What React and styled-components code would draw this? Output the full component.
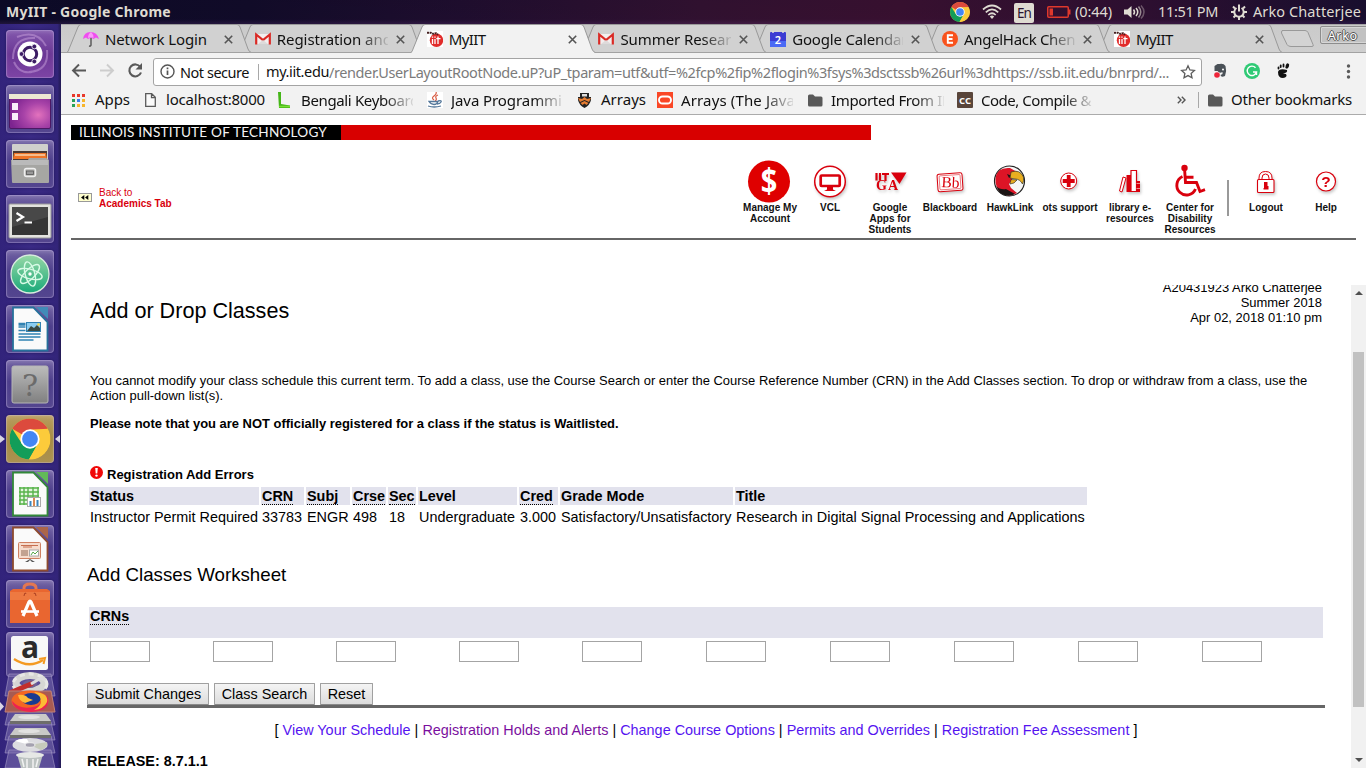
import React, { useLayoutEffect, useRef, useState } from "react";
import styled, { createGlobalStyle, css } from "styled-components";

const UI = '"Noto Sans", "Open Sans", sans-serif';
const DOC = '"Liberation Sans", Arial, sans-serif';
const RED = "#d9000d";

const Global = createGlobalStyle`
  html, body { margin: 0; padding: 0; }
  body { width: 1366px; height: 768px; overflow: hidden; background: #fff; font-family: ${DOC}; }
  *, *::before, *::after { box-sizing: border-box; }
`;

/* Text that spreads its letters so it fills a known width */
const FitText = styled.span`
  display: inline-block;
  white-space: pre;
  flex: none;
  margin-top: ${(p) => (p.$flat ? 0 : -2)}px;
`;
function Fit({ w, flat, children }) {
  const ref = useRef(null);
  const [gap, setGap] = useState(0);
  useLayoutEffect(() => {
    const natural = ref.current.getBoundingClientRect().width;
    setGap((w - natural) / String(children).length);
  }, [w, children]);
  return <FitText ref={ref} $flat={flat} style={{ letterSpacing: `${gap}px` }}>{children}</FitText>;
}

const Screen = styled.div`
  display: flex;
  flex-direction: column;
  width: 1366px;
  height: 768px;
  overflow: hidden;
`;

/* ---------- system panel ---------- */
const Panel = styled.header`
  display: flex;
  align-items: center;
  height: 24px;
  flex: none;
  padding: 0 5px 0 6px;
  background: linear-gradient(180deg, rgba(0,0,0,.12), rgba(0,0,0,.1) 80%, rgba(90,50,110,.25)),
    linear-gradient(90deg, #0d0b2b 0, #130c2d 250px, #220f33 460px, #361335 700px, #3e1235 900px, #321136 1150px, #1b1034 1366px);
  color: #dfdbd2;
  font: 14.5px/24px ${UI};
`;
const WindowTitle = styled.div`
  font-weight: 700;
  font-size: 14px;
  flex: 1;
`;
const Indicator = styled.div`
  display: flex;
  align-items: center;
  height: 24px;
  margin-right: ${(p) => p.$after || 0}px;
  svg { display: block; }
`;
const LangBadge = styled.span`
  width: 20px;
  height: 20px;
  margin-top: 1px;
  border-radius: 2px;
  background: #dfdbd2;
  color: #2b1430;
  font: 13.5px/21px ${UI};
  text-align: center;
`;

/* ---------- launcher ---------- */
const Body = styled.div`
  display: flex;
  flex: 1;
  min-height: 0;
`;
const Launcher = styled.nav`
  width: 61px;
  flex: none;
  display: flex;
  flex-direction: column;
  padding-top: 6px;
  gap: 7px;
  background: linear-gradient(90deg, #32237b, #3a2a85 50%, #33257a 94%, #221a52);
  overflow: hidden;
`;
const Tile = styled.div`
  position: relative;
  width: 48px;
  height: 48px;
  flex: none;
  margin-left: 6px;
  border-radius: 4px;
  background: ${(p) => p.$bg || "linear-gradient(180deg, #7465a5, #4b3c8b 45%, #54468f)"};
  box-shadow: inset 0 0 0 1px rgba(205, 190, 240, .3), inset 0 2px 4px rgba(255, 255, 255, .17), 0 0 3px rgba(15, 5, 60, .5);
  svg { display: block; }
`;
const AmazonTile = styled(Tile)`
  height: 45px;
  margin-top: -3px;
`;
const RunMark = styled.i`
  position: absolute;
  top: 20px;
  border: 4px solid transparent;
  ${(p) => p.$right
    ? css`right: -6px; border-right: 5px solid #d8d4e4; border-left: 0;`
    : css`left: -6px; border-left: 5px solid #d8d4e4; border-right: 0;`}
`;
const Stack = styled.div`
  margin-top: -12px;
  z-index: 1;
  svg { display: block; }
`;

/* ---------- browser ---------- */
const Browser = styled.main`
  flex: 1;
  min-width: 0;
  display: flex;
  flex-direction: column;
  background: #fff;
`;
const TabStrip = styled.div`
  display: flex;
  height: 29px;
  flex: none;
  padding-left: 5px;
  background: linear-gradient(#cacaca, #cfcfcf);
  box-shadow: inset 0 1px #a7a7a7, inset 0 -1px #a2a2a2;
`;
const TabBox = styled.div`
  position: relative;
  display: flex;
  align-items: center;
  width: 186px;
  margin-right: -14.2px;
  height: 29px;
  flex: none;
  padding: 1px 0 0 17px;
  z-index: ${(p) => p.$z};
  font: 15px/20px ${UI};
  color: #111;
`;
const TabShape = styled.svg`
  position: absolute;
  left: 0;
  top: 0;
  z-index: -1;
`;
const Favicon = styled.span`
  width: 16px;
  height: 16px;
  flex: none;
  svg { display: block; }
`;
const Clip = styled.span`
  width: ${(p) => p.$w}px;
  flex: none;
  overflow: hidden;
  white-space: nowrap;
  ${(p) => p.$fade && css`mask-image: linear-gradient(90deg, #000 74%, rgba(0,0,0,.1) 100%);`}
`;
const TabTitle = styled(Clip)`
  margin: 0 8px 0 6px;
`;
const NewTab = styled.svg`
  margin: 6px 0 0 -3px;
  flex: none;
`;
const Profile = styled.div`
  width: 50px;
  height: 18px;
  margin: 2px 0 0 4px;
  flex: none;
  border: 1px solid #8d8d8d;
  border-radius: 2px 0 0 2px;
  background: #c2c2c2;
  box-shadow: inset 0 0 0 1px #d6d6d6;
  color: #fff;
  text-shadow: 1px 0 0 #555, -1px 0 0 #555, 0 1px 0 #555, 0 -1px 0 #555;
  font: 12.5px/18px ${UI};
  padding-left: 7px;
`;
const Toolbar = styled.div`
  display: flex;
  align-items: center;
  height: 33px;
  flex: none;
  padding-top: 3px;
  background: #f2f2f2;
  > svg { flex: none; }
`;
const Omnibox = styled.div`
  display: flex;
  align-items: center;
  width: 1049px;
  flex: none;
  height: 28px;
  margin: 1px 9px 0 0;
  padding-left: 6px;
  border: 1px solid #a4a4a4;
  border-radius: 3px;
  background: #fff;
  color: #111;
  font: 14.5px/24px ${UI};
  svg { flex: none; }
`;
const NotSecure = styled.span`
  margin-left: 5px;
`;
const Divider = styled.span`
  width: 1px;
  height: 16px;
  margin: 0 ${(p) => p.$r}px 0 ${(p) => p.$l}px;
  background: #a8a8a8;
  flex: none;
`;
const UrlRest = styled.span`
  color: #7b7b7b;
  margin-right: 11px;
`;
const BookmarkBar = styled.div`
  display: flex;
  align-items: center;
  height: 29px;
  flex: none;
  background: #f2f2f2;
  border-bottom: 1px solid #ababab;
  font: 15px/22px ${UI};
  color: #111;
`;
const Bookmark = styled.div`
  display: flex;
  align-items: center;
  gap: ${(p) => p.$gap}px;
  margin-left: ${(p) => p.$before}px;
  svg { display: block; flex: none; }
`;

/* ---------- portal page ---------- */
const Page = styled.section`
  flex: 1;
  min-height: 0;
  display: flex;
  flex-direction: column;
  padding-top: 10px;
`;
const Banner = styled.div`
  width: 800px;
  height: 15px;
  margin-left: 10px;
  flex: none;
  background: #d80000;
  display: flex;
`;
const BannerName = styled.div`
  width: 270px;
  padding-left: 8px;
  background: #000;
  color: #f4f4f4;
  font: 13.6px/15px Lato, sans-serif;
`;
const PortalHead = styled.div`
  display: flex;
  height: 100px;
  margin: 0 10px;
  flex: none;
  border-bottom: 2px solid #666;
`;
const BackLink = styled.a`
  display: flex;
  align-items: center;
  gap: 7px;
  width: 669px;
  height: 22px;
  margin-top: 47px;
  padding-left: 7px;
  color: ${RED};
  font: 10px/11px ${DOC};
  b { display: block; }
`;
const BackIcon = styled.svg`
  display: block;
  margin-bottom: 2px;
`;
const PortalLink = styled.a`
  width: 60px;
  padding-top: 10px;
  color: #111;
  font: bold 10px/11px ${DOC};
  text-align: center;
  svg { display: block; overflow: visible; }
`;
const Shadowed = styled.svg`
  filter: drop-shadow(1px 2px 1.5px rgba(0, 0, 0, .22));
`;
const PortalRule = styled.span`
  width: 2px;
  height: 36px;
  margin: 40px 7px 0;
  background: #999;
`;

/* ---------- registration frame ---------- */
const Frame = styled.div`
  display: flex;
  flex: 1;
  min-height: 0;
  margin-top: 45px;
  overflow: hidden;
`;
const Doc = styled.div`
  width: 1238px;
  margin: 0 26px;
  flex: none;
  color: #000;
  font: 14.4px/17px ${DOC};
`;
const DocHead = styled.div`
  display: flex;
  justify-content: space-between;
  height: 88px;
  padding: 0 3px;
`;
const DocTitle = styled.h1`
  margin: 13px 0 0;
  font: 21.6px/26px ${DOC};
`;
const DocInfo = styled.div`
  margin-top: -5px;
  text-align: right;
  font-size: 12.96px;
  line-height: 15px;
`;
const Note = styled.p`
  margin: 0 0 ${(p) => p.$after}px;
  padding: 0 3px;
  font: ${(p) => (p.$bold ? "bold" : "normal")} 12.96px/15px ${DOC};
`;
const ErrorNote = styled.p`
  display: flex;
  align-items: center;
  gap: 4px;
  height: 15px;
  margin: 0;
  padding: 0 3px;
  font: bold 13px/15px ${DOC};
  svg { margin-bottom: 4px; }
`;
const Errors = styled.table`
  table-layout: fixed;
  width: 1002px;
  border-spacing: 2px;
  margin-top: 3px;
  font: 14.4px/16px ${DOC};
  th, td { padding: 1px; text-align: left; white-space: nowrap; }
  th { background: #e2e2ed; height: 18px; line-height: 15px; }
  td { height: 20px; }
`;
const HeadCell = styled.th`
  width: ${(p) => p.$w}px;
`;
const Term = styled.abbr`
  text-decoration: none;
  border-bottom: 1px dotted #000;
`;
const SheetTitle = styled.h2`
  margin: 35px 0 21px;
  font: 18.72px/22px ${DOC};
`;
const CrnHead = styled.div`
  height: 31px;
  margin: 0 2px 3px;
  padding: 1px 1px;
  background: #e2e2ed;
  font-weight: 700;
  line-height: 16px;
`;
const CrnRow = styled.div`
  display: grid;
  grid-template-columns: repeat(4, 121px) repeat(6, 122px);
  column-gap: 2px;
  margin: 0 3px 21px;
`;
const CrnInput = styled.input`
  width: 60px;
  height: 21px;
  padding: 1px;
  border: 1px solid #a4a4a4;
  border-radius: 0;
  background: #fff;
`;
const Actions = styled.div`
  display: flex;
  gap: 5px;
  border-bottom: 3px solid #666;
`;
const ActionButton = styled.button`
  width: ${(p) => p.$w}px;
  height: 22px;
  padding: 0;
  border: 1px solid #a0a0a0;
  border-bottom-color: #8a8a8a;
  border-radius: 1px;
  background: linear-gradient(#f4f4f4, #dcdcdc);
  color: #000;
  font: 14.4px/19px ${DOC};
`;
const Links = styled.div`
  margin-top: 14px;
  text-align: center;
  white-space: nowrap;
  letter-spacing: .014px;
`;
const Anchor = styled.a`
  color: ${(p) => (p.$visited ? "#7a0f9e" : "#5514f0")};
`;
const Release = styled.div`
  margin-top: 14px;
  font-weight: 700;
`;
const Scrollbar = styled.div`
  display: flex;
  flex-direction: column;
  align-items: center;
  width: 15px;
  background: #f1f1f1;
`;
const ScrollThumb = styled.div`
  width: 11px;
  height: 355px;
  margin: 57px 0 auto;
  background: #c1c1c1;
`;
const ScrollArrow = styled.i`
  border: 4px solid transparent;
  ${(p) => p.$up
    ? css`margin-top: 6px; border-top: 0; border-bottom: 4px solid #505050;`
    : css`margin-bottom: 6px; border-bottom: 0; border-top: 4px solid #505050;`}
`;

/* ---------- drawings ---------- */
const ChromeMark = ({ size, x = 0, y = 0 }) => (
  <svg x={x} y={y} width={size} height={size} viewBox="0 0 40 40">
    <circle cx="20" cy="20" r="20" fill="#fccb3b" />
    <path d="M20 20 L2.7 10 A20 20 0 0 1 37.3 10 L20 11z" fill="#dc4a3d" />
    <path d="M2.7 10 A20 20 0 0 0 19 40 L28 24.5 L12 24.5z" fill="#139d59" />
    <path d="M20 11H37.3A20 20 0 0 1 19 40L28 24z" fill="#fccb3b" />
    <circle cx="20" cy="20" r="9.4" fill="#fff" />
    <circle cx="20" cy="20" r="7.7" fill="#4386f5" />
  </svg>
);
const Umbrella = () => (
  <svg width="16" height="16" viewBox="0 0 16 16">
    <path d="M0 8Q1 1 7.5 1Q14 1 16 8L13 6.500L10.500 8L8 6.500L5 8L3 6.500z" fill="#f04df0" />
    <path d="M5 7Q5 3 8 1Q10.500 3 10.500 7L8 6z" fill="#f99bf8" />
    <path d="M8 7v7q0 1.500-2 1" fill="none" stroke="#4b4b4b" strokeWidth="1.300" />
  </svg>
);
const Gmail = () => (
  <svg width="16" height="16" viewBox="0 0 16 16">
    <path d="M1 3h14v10H1z" fill="#f3eeee" />
    <path d="M1.200 13.500V3.500L8 9l6.800-5.500v10" fill="none" stroke="#da2a25" strokeWidth="2.200" />
    <path d="M3 13l5-4 5 4" fill="#dedada" />
  </svg>
);
const IitIcon = () => (
  <svg width="16" height="16" viewBox="0 0 16 16">
    <rect width="16" height="16" fill="#fff" />
    <circle cx="9.500" cy="9.300" r="6.700" fill="#e12b2a" />
    <path d="M0 1.800h4l2 1 3-.5 2 1.500" fill="none" stroke="#442020" strokeWidth="2" strokeDasharray="2 .6" />
    <path d="M5.500 8v5M8 8v5M11 5.500V13M9.300 7.700h4.200M5.500 5.500v1.300M8 5.500v1.300" stroke="#fff" strokeWidth="1.300" />
  </svg>
);
const Calendar = () => (
  <svg width="16" height="16" viewBox="0 0 16 16">
    <rect y="1" width="16" height="15" rx="1" fill="#3c3bd3" />
    <path d="M0 10h16v5q0 1-1 1H1q-1 0-1-1z" fill="#4b6af5" />
    <path d="M3 0v2M13 0v2" stroke="#ddd" strokeWidth="1.500" />
    <text x="8" y="12.500" fill="#fff" fontSize="11" fontWeight="600" textAnchor="middle" fontFamily="Noto Sans">2</text>
  </svg>
);
const Eventbrite = () => (
  <svg width="16" height="16" viewBox="0 0 16 16">
    <circle cx="8" cy="8" r="8" fill="#f8521c" />
    <path d="M11 4.200H5.800v7.600H11M6 8h4.500" fill="none" stroke="#fff" strokeWidth="1.900" />
  </svg>
);
const Close = () => (
  <svg width="9" height="9" viewBox="0 0 9 9">
    <path d="M.8.8l7.400 7.400M8.200.8L.8 8.200" stroke="#555" strokeWidth="1.600" />
  </svg>
);
const Folder = () => (
  <svg width="15" height="13" viewBox="0 0 15 13">
    <path d="M0 2q0-1.500 1.500-1.500H5L7 2.500h6q1.500 0 1.500 1.500v7q0 1.500-1.500 1.500H1.500Q0 12.500 0 11z" fill="#595959" />
  </svg>
);

const TABS = [
  { icon: <Umbrella />, title: "Network Login", w: 102 },
  { icon: <Gmail />, title: "Registration and", w: 115, fade: true },
  { icon: <IitIcon />, title: "MyIIT", w: 37, active: true },
  { icon: <Gmail />, title: "Summer Research", w: 127, fade: true },
  { icon: <Calendar />, title: "Google Calendar", w: 115, fade: true },
  { icon: <Eventbrite />, title: "AngelHack Chenn", w: 120, fade: true },
  { icon: <IitIcon />, title: "MyIIT", w: 37 },
];

function Tab({ tab, index }) {
  return (
    <TabBox $z={tab.active ? 20 : 10 - index}>
      <TabShape width="186" height="29" viewBox="0 0 186 29">
        <path
          d="M0.500 28.500C2 28 2.500 26.500 3 25L12 3Q13 .5 15 .5H171Q173 .5 174 3L182 25Q183 28 185.500 28.500"
          fill={tab.active ? "#f2f2f2" : "#d1d1d1"}
          stroke="#999"
        />
        {!tab.active && <path d="M0 28.500H186" stroke="#a2a2a2" />}
        {tab.active && <path d="M2 28.500H184" stroke="#f2f2f2" />}
      </TabShape>
      <Favicon>{tab.icon}</Favicon>
      <TabTitle $w={111} $fade={tab.fade}><Fit w={tab.w}>{tab.title}</Fit></TabTitle>
      <Close />
    </TabBox>
  );
}

/* launcher icons, 48 x 48 each */
const Dash = () => (
  <svg width="48" height="48" viewBox="0 0 48 48">
    <path d="M7 29Q7 7 29 8M41 20Q43 41 23 42M11 7Q31-1 40 16M8 32Q15 48 34 39" stroke="#c7a0dc" strokeWidth="2" fill="none" opacity=".5" />
    <circle cx="24" cy="24" r="12.500" fill="#fff" />
    <circle cx="24" cy="24" r="6.700" fill="none" stroke="#3c1c64" strokeWidth="3" />
    <circle cx="15.500" cy="24" r="2.400" fill="#3c1c64" stroke="#fff" strokeWidth=".8" />
    <circle cx="28.300" cy="16.500" r="2.400" fill="#3c1c64" stroke="#fff" strokeWidth=".8" />
    <circle cx="28.300" cy="31.500" r="2.400" fill="#3c1c64" stroke="#fff" strokeWidth=".8" />
  </svg>
);
const Workspace = () => (
  <svg width="48" height="48" viewBox="0 0 48 48">
    <defs><radialGradient id="wk" cx=".7" cy=".6" r=".7"><stop offset="0" stopColor="#e372bd" /><stop offset=".5" stopColor="#a843a8" /><stop offset="1" stopColor="#7d2490" /></radialGradient></defs>
    <rect x="3.500" y="9.500" width="41" height="34" rx="1.500" fill="url(#wk)" stroke="#4c1864" />
    <path d="M3 9h42v5H3z" fill="#ece8d2" />
    <path d="M6 18h6v7H6zM6 28h6v7H6z" fill="#f9effa" />
  </svg>
);
const Files = () => (
  <svg width="48" height="48" viewBox="0 0 48 48">
    <path d="M6 5q0-1 1-1h34q1 0 1 1v16H6z" fill="#d0d0cc" />
    <path d="M7 11h34v11H7z" fill="#4b3a33" />
    <path d="M8 13h32l1 6H7z" fill="#ee7527" /><path d="M9 15h30" stroke="#f9d5ae" strokeWidth="1.500" />
    <path d="M5 20h17l1-2h17l3 2v22q0 1-1 1H7q-1 0-1-1z" fill="#a6a6a3" />
    <path d="M6 20h36v5H6z" fill="#bababa" />
    <rect x="18.500" y="28.500" width="11" height="8" rx="2" fill="#b8b8b5" stroke="#eee" strokeWidth="1.500" />
    <rect x="20.500" y="31" width="7" height="3.500" fill="#999" stroke="#555" strokeWidth=".8" />
  </svg>
);
const Terminal = () => (
  <svg width="48" height="48" viewBox="0 0 48 48">
    <rect x="3" y="9" width="42" height="34" rx="1" fill="#e3e3df" stroke="#999" />
    <rect x="6" y="12" width="36" height="28" fill="#353535" />
    <path d="M6 12h36v10L6 32z" fill="#555" opacity=".6" />
    <path d="M10.500 18l6.500 4-6.500 4M18.500 27.500h7.500" fill="none" stroke="#fff" strokeWidth="2.200" />
  </svg>
);
const Atom = () => (
  <svg width="48" height="48" viewBox="0 0 48 48">
    <defs><linearGradient id="at" x2="0" y2="1"><stop stopColor="#97d8a6" /><stop offset="1" stopColor="#19a979" /></linearGradient></defs>
    <circle cx="24" cy="24" r="19" fill="url(#at)" stroke="#d9ecdf" strokeWidth="1.300" />
    <g fill="none" stroke="#d8fae6" strokeWidth="1.400">
      <ellipse cx="24" cy="24" rx="12.500" ry="4.800" transform="rotate(15 24 24)" />
      <ellipse cx="24" cy="24" rx="12.500" ry="4.800" transform="rotate(75 24 24)" />
      <ellipse cx="24" cy="24" rx="12.500" ry="4.800" transform="rotate(135 24 24)" />
    </g>
    <circle cx="24" cy="24" r="1.700" fill="#fff" />
  </svg>
);
const OfficeSheet = ({ color, corner, children }) => (
  <svg width="48" height="48" viewBox="0 0 48 48">
    <path d="M7 2.500h20.500L41.500 17v28.500H7z" fill="#fafafa" stroke={color} strokeWidth="1.800" />
    <path d="M30 2h12v12z" fill={corner} />
    {children}
  </svg>
);
const Writer = () => (
  <OfficeSheet color="#26709b" corner="#418bb8">
    <path d="M12.500 18.500h7M12.500 22h7M12.500 25.500h7M12.500 29h22M12.500 32h22M12.500 35h15M12.500 20h7" stroke="#3182b2" strokeWidth="1.300" />
    <rect x="20.500" y="17.500" width="14" height="9" fill="#8bcdf1" stroke="#3182b2" />
    <path d="M21 26l4-5 3 2 3-3 3 3v3z" fill="#3b4a43" /><circle cx="32.500" cy="19.500" r="1.300" fill="#f9d948" />
  </OfficeSheet>
);
const Calc = () => (
  <OfficeSheet color="#328839" corner="#62b958">
    <rect x="13" y="17" width="20" height="18" fill="#e5f5df" />
    <path d="M13 18h20M13 22h20M13 26h20M13 30h20M13 34h9M14 17v18M18 17v18M22 17v18M27 17v10M32 17v10" stroke="#58b34b" strokeWidth="1.400" />
    <rect x="21.500" y="27.500" width="13" height="9" fill="#fff" stroke="#aaa" />
    <path d="M24.500 36v-5" stroke="#3b86bd" strokeWidth="2" /><path d="M28 36v-8" stroke="#d98852" strokeWidth="2" /><path d="M31.500 36v-6" stroke="#3b86bd" strokeWidth="2" />
  </OfficeSheet>
);
const Impress = () => (
  <OfficeSheet color="#8e4a2e" corner="#ab6549">
    <rect x="12.500" y="17.500" width="22" height="16" rx="1" fill="#f6dccd" stroke="#cf8061" />
    <path d="M15 20.500h17M17 22h9" stroke="#c76f4f" /><path d="M15 26h7M15 28h7M15 30h7" stroke="#8f6855" strokeWidth="1.200" />
    <rect x="23.500" y="25" width="9" height="6" fill="#fff" stroke="#aaa" /><path d="M25 30l2-3 2 2 3-3" stroke="#56a748" fill="none" />
    <path d="M24 34l-5 3h3l2-2 2 2h3z" fill="#555" />
  </OfficeSheet>
);
const Unknown = () => (
  <svg width="48" height="48" viewBox="0 0 48 48">
    <defs><linearGradient id="uk" x2="0" y2="1"><stop stopColor="#bcbcbc" /><stop offset="1" stopColor="#808080" /></linearGradient></defs>
    <rect x="6" y="6" width="36" height="37" rx="2" fill="url(#uk)" stroke="#b5b5b5" />
    <text x="24" y="36" textAnchor="middle" fontFamily="DejaVu Serif" fontSize="30" fill="#6b6b6b">?</text>
  </svg>
);
const ChromeTile = () => (
  <svg width="48" height="48" viewBox="0 0 48 48"><ChromeMark size={41} x={3.500} y={3.500} /></svg>
);
const Software = () => (
  <svg width="48" height="48" viewBox="0 0 48 48">
    <path d="M18 14V8q0-4 6-4t6 4v6" fill="none" stroke="#e47750" strokeWidth="3" />
    <path d="M4 11l3-2h34l3 2v32H4z" fill="#e96630" /><path d="M4 12h40v8H4z" fill="#ef8248" opacity=".7" />
    <path d="M18 16q1-5 2-2M30 16q-1-5-2-2" stroke="#ad4022" fill="none" />
    <path d="M17 36l6-14q1-2 2 0l6 14" fill="none" stroke="#fff" strokeWidth="3.200" /><path d="M15 31.500h18" stroke="#fff" strokeWidth="2.600" />
  </svg>
);
const Amazon = () => (
  <svg width="48" height="45" viewBox="0 0 48 45">
    <rect x="5" y="4" width="37" height="34" rx="2.500" fill="#f8f8f8" />
    <text x="24" y="26" textAnchor="middle" fontFamily="Open Sans" fontWeight="700" fontSize="30" fill="#2b2b2b">a</text>
    <path d="M8 27Q23 37 37 28" fill="none" stroke="#f49a22" strokeWidth="2.300" /><path d="M33 27l6-1-1.500 6" fill="none" stroke="#f49a22" strokeWidth="2" />
  </svg>
);
const FoldedStack = () => (
  <svg width="61" height="96" viewBox="0 672 61 96">
    <g fill="#7d71ae" fillOpacity=".55" stroke="#a69bc8" strokeOpacity=".6">
      <path d="M9 674h42l4 22H5z" /><path d="M9 708h42l4 17H5z" /><path d="M9 722h42l4 18H5z" /><path d="M9 736h42l4 17H5z" /><path d="M9 750h42l4 18H5z" />
    </g>
    <ellipse cx="30" cy="683" rx="14" ry="7.500" fill="none" stroke="#d6d6d3" strokeWidth="7" />
    <ellipse cx="30" cy="684" rx="17" ry="10" fill="none" stroke="#e8e8e5" strokeWidth="3" strokeDasharray="5 4" />
    <ellipse cx="30" cy="684" rx="7" ry="4" fill="#706394" />
    <path d="M12 692L31 684" stroke="#c32f2c" strokeWidth="5" strokeLinecap="round" /><path d="M31 684l10-6 5 2" fill="none" stroke="#ddd" strokeWidth="3" />
    <path d="M9 691h42l4 21H5z" fill="#a85b52" stroke="#c08279" />
    <ellipse cx="30" cy="701" rx="18.500" ry="10.500" fill="#f46622" />
    <path d="M47 695Q53 711 31 712Q13 711 12 701Q20 710 33 707Q43 705 47 695z" fill="#ec2351" />
    <path d="M34 692Q49 693 47 702Q44 709 34 710Q48 702 34 692z" fill="#fcbc35" />
    <ellipse cx="31" cy="699" rx="9.500" ry="6" fill="#193a91" /><path d="M18 695q7-1 10 3l5 2-8 3q-6-2-7-8z" fill="#ffbb38" />
    <path d="M0 702l4 4.500-4 4.500z" fill="#dad6e6" />
    {[714, 728].map((y) => (
      <g key={y}><path d={`M15 ${y}h31l5 7H10z`} fill="#c9c9c7" /><path d={`M10 ${y + 7}h41v3H10z`} fill="#6d6d6b" /><ellipse cx="29" cy={y + 3} rx="11" ry="2" fill="#e2e2e0" /></g>
    ))}
    <ellipse cx="30" cy="745" rx="17.500" ry="7" fill="#dcdce0" /><path d="M30 745l17-3q2 5-6 8z" fill="#c6cabb" /><path d="M30 745l-15-4q5-3 12-2z" fill="#fff" />
    <ellipse cx="30" cy="745" rx="5" ry="2.300" fill="#a4a1af" stroke="#eee" />
    <path d="M17 754h26l-4 14H21z" fill="#bdc3c2" /><ellipse cx="30" cy="755" rx="14" ry="3" fill="#e6e8e6" />
    <path d="M22 759l2 8M27 759v9M33 759v9M38 759l-2 8" stroke="#f2f2f2" strokeWidth="1.500" />
  </svg>
);

const TILES = [
  { icon: <Dash />, bg: "linear-gradient(180deg, #8258ad, #6b3795 50%, #7d44a5)" },
  { icon: <Workspace /> }, { icon: <Files /> }, { icon: <Terminal /> }, { icon: <Atom /> },
  { icon: <Writer /> }, { icon: <Unknown /> },
  { icon: <ChromeTile />, bg: "linear-gradient(180deg, #b99d5f, #a58a42 50%, #ab9251)", running: true },
  { icon: <Calc /> }, { icon: <Impress /> }, { icon: <Software /> },
];

/* portal icons, 60 x 52 */
const Icon60 = ({ children }) => <Shadowed width="60" height="52" viewBox="0 0 60 52">{children}</Shadowed>;
const Flat60 = ({ children }) => <svg width="60" height="52" viewBox="0 0 60 52">{children}</svg>;

const PORTAL = [
  ["Manage My Account", <Flat60><circle cx="29" cy="31.500" r="21" fill="#df0000" /><text x="29" y="43.500" textAnchor="middle" fill="#fff" fontFamily="Open Sans" fontWeight="700" fontSize="34" transform="translate(4.350 0) scale(.85 1)">$</text></Flat60>],
  ["VCL", <Icon60><circle cx="30" cy="31.500" r="15.300" fill="#fff" stroke={RED} strokeWidth="1.500" /><rect x="20.700" y="25.500" width="19" height="10.500" rx="1" fill="#fff" stroke={RED} strokeWidth="2.700" /><path d="M27 37h6v2.500l3 1.500H24l3-1.500z" fill={RED} /></Icon60>],
  ["Google Apps for Students", <Icon60><path d="M16.500 23v7.500M20 23v7.500M22 24h7M25.500 24v7" stroke={RED} strokeWidth="2.200" /><path d="M31 22.500h15.500L39.500 34z" fill={RED} /><text x="16" y="40" fill={RED} fontFamily="Liberation Serif" fontWeight="700" fontSize="14" textLength="22">GA</text></Icon60>],
  ["Blackboard", <Icon60><g transform="rotate(-4 30 32)" stroke={RED} fill="#fff"><rect x="17.500" y="23.500" width="25" height="17.500" rx="2" /><rect x="19.500" y="25.200" width="21" height="14" rx="1" strokeWidth=".5" /></g><text x="30.500" y="37.500" transform="rotate(3 30 32)" textAnchor="middle" fill={RED} fontFamily="Liberation Serif" fontWeight="400" fontSize="15.500">Bb</text></Icon60>],
  ["HawkLink", <Flat60><circle cx="29.500" cy="31" r="15" fill="#f6f6f6" stroke="#222" strokeWidth="1.200" /><path d="M15.500 28Q17 17 30 18L37 22Q31 25 32 30L29 34L31 38L37 43Q29 48 21 42.500Q15 38 15.500 28z" fill="#dc1426" /><path d="M16 36Q20 40 26 39L35 44Q28 48 20 43zM27 24l5 2-3 2z" fill="#1b1414" /><path d="M31 22Q40 19 43.500 27Q44 31 42.500 34Q40 29 35 29L30 28z" fill="#e9ae20" stroke="#332" strokeWidth=".7" /><path d="M31 29.500l6 .5-3 3-4 1z" fill="#e9ae20" stroke="#222" strokeWidth=".6" /></Flat60>],
  ["ots support", <Icon60><circle cx="28.700" cy="31" r="8" fill="#fff" stroke={RED} strokeWidth="1" /><path d="M28.700 25v12M22.700 31h12" stroke={RED} strokeWidth="3.800" /></Icon60>],
  ["library e-resources", <Icon60><path d="M23 27l3 1-4 14-2.500-1z" fill="#fff" stroke={RED} strokeWidth="1" /><path d="M26.500 25h4.500v17h-4.500z" fill={RED} /><path d="M31 20.500h5.500v21H31z" fill="#fff" stroke={RED} strokeWidth="1.200" /><path d="M36.500 31H40v11h-3.500z" fill={RED} /><path d="M36.500 33.500H40M36.500 38.500H40" stroke="#f8b0b0" strokeWidth=".8" /></Icon60>],
  ["Center for Disability Resources", <Flat60><circle cx="24.500" cy="18" r="3.200" fill={RED} /><path d="M24.700 21l.8 11.500h11l3.500 9 5-1.800M25 27.200h8.500" fill="none" stroke={RED} strokeWidth="2.900" /><path d="M22.500 26.500A9.700 9.700 0 1 0 35.500 39" fill="none" stroke={RED} strokeWidth="2.900" /></Flat60>],
];
const SESSION = [
  ["Logout", <Icon60><path d="M23 32v-4q0-6.500 6.500-6.500t6.500 6.500v4" fill="#fff" stroke={RED} strokeWidth="1" /><path d="M26 31v-3q0-4 3.500-4t3.500 4v3" fill="none" stroke={RED} strokeWidth="1" /><rect x="21.500" y="29.500" width="16.500" height="13" rx="1" fill="#fff" stroke={RED} strokeWidth="1.100" /><path d="M28 32h3.500v4h1v3.500h-5V38H28z" fill={RED} /></Icon60>],
  ["Help", <Icon60><circle cx="30" cy="31.500" r="9.500" fill="#fff" stroke={RED} strokeWidth="1.200" /><text x="30" y="37" textAnchor="middle" fill={RED} fontFamily="Liberation Sans" fontWeight="700" fontSize="15.500">?</text></Icon60>],
];

const COLUMNS = [
  ["Status", "Instructor Permit Required", 170],
  ["CRN", "33783", 43, true],
  ["Subj", "ENGR", 44, true],
  ["Crse", "498", 34, true],
  ["Sec", "18", 28, true],
  ["Level", "Undergraduate", 99],
  ["Cred", "3.000", 39, true],
  ["Grade Mode", "Satisfactory/Unsatisfactory", 173],
  ["Title", "Research in Digital Signal Processing and Applications", 352],
];
const LINKS = [
  ["View Your Schedule"], ["Registration Holds and Alerts", true], ["Change Course Options"],
  ["Permits and Overrides"], ["Registration Fee Assessment"],
];

function SystemPanel() {
  return (
    <Panel>
      <WindowTitle><Fit w={165}>MyIIT - Google Chrome</Fit></WindowTitle>
      <Indicator $after={12}><ChromeMark size={20} /></Indicator>
      <Indicator $after={12}>
        <svg width="20" height="16" viewBox="0 0 20 16"><g fill="none" stroke="#dfdbd2" strokeWidth="1.700"><path d="M1 5.500Q10-2.500 19 5.500" /><path d="M3.800 8.300Q10 2.500 16.200 8.300" /><path d="M6.300 11Q10 7.500 13.700 11" /></g><path d="M7.800 12.500Q10 10.700 12.200 12.500L10 15z" fill="#dfdbd2" /></svg>
      </Indicator>
      <Indicator $after={13}><LangBadge><Fit w={14} flat>En</Fit></LangBadge></Indicator>
      <Indicator $after={4}>
        <svg width="24" height="12" viewBox="0 0 24 12"><rect x=".75" y=".75" width="20.500" height="10.500" rx="1" fill="none" stroke="#df382c" strokeWidth="1.500" /><path d="M2.500 2.500h3.500v7H2.500z" fill="#df382c" /><path d="M22 3.500h1.500v5H22z" fill="#df382c" /></svg>
      </Indicator>
      <Indicator $after={12}><Fit w={37}>(0:44)</Fit></Indicator>
      <Indicator $after={13}>
        <svg width="21" height="14" viewBox="0 0 21 14"><path d="M0 4.500h3.500L7.500 1v12L3.500 9.500H0z" fill="#dfdbd2" /><g fill="none" stroke="#dfdbd2" strokeWidth="1.500"><path d="M9.500 4.500q2 2.500 0 5" /><path d="M12 3q3.500 4 0 8" /><path d="M14.500 1.500q4.500 5.500 0 11" opacity=".6" /><path d="M17 .5q6 6.500 0 13" opacity=".35" /></g></svg>
      </Indicator>
      <Indicator $after={13}><Fit w={60}>11:51 PM</Fit></Indicator>
      <Indicator $after={6}>
        <svg width="16" height="16" viewBox="0 0 16 16"><path d="M5.500 4A4.700 4.700 0 1 0 10.500 4" fill="none" stroke="#dfdbd2" strokeWidth="2" /><path d="M8 .5v7M0 8h3M13 8h3M2 2.500L4 4.500M14 2.500L12 4.500M2.500 13.500L4.500 11.500M13.500 13.500L11.500 11.500M8 13v3" stroke="#dfdbd2" strokeWidth="2" /></svg>
      </Indicator>
      <Fit w={108}>Arko Chatterjee</Fit>
    </Panel>
  );
}

function BrowserChrome() {
  return (
    <>
      <TabStrip>
        {TABS.map((t, i) => <Tab key={i} tab={t} index={i} />)}
        <NewTab width="50" height="18" viewBox="-14 0 50 18"><path d="M2 .5h23q2 0 3 2l5 12q1 2-1 2H11q-3 0-4-2L1.500 3Q1 .5 3 .5z" fill="#d3d3d3" stroke="#999" /></NewTab>
        <Profile><Fit w={30}>Arko</Fit></Profile>
      </TabStrip>
      <Toolbar>
        <svg width="92" height="20" viewBox="61 0 92 20">
          <path d="M86 9.500H73.500M79 3.500L73 9.500l6 6" fill="none" stroke="#595959" strokeWidth="1.900" />
          <path d="M100 9.500h12.500M107 3.500l6 6-6 6" fill="none" stroke="#cdcdcd" strokeWidth="1.900" />
          <path d="M140.300 6A6 6 0 1 0 141 11.500" fill="none" stroke="#595959" strokeWidth="2.100" /><path d="M142 2v6.500h-6.500z" fill="#595959" />
        </svg>
        <Omnibox>
          <svg width="15" height="15" viewBox="0 0 15 15"><circle cx="7.500" cy="7.500" r="6.500" fill="none" stroke="#555" strokeWidth="1.400" /><path d="M7.500 6.500v4.500M7.500 3.500v1.700" stroke="#555" strokeWidth="1.700" /></svg>
          <NotSecure><Fit w={69}>Not secure</Fit></NotSecure>
          <Divider $l={9} $r={7} />
          <Fit w={63}>my.iit.edu</Fit>
          <UrlRest><Fit w={840}>/render.UserLayoutRootNode.uP?uP_tparam=utf&amp;utf=%2fcp%2fip%2flogin%3fsys%3dsctssb%26url%3dhttps://ssb.iit.edu/bnrprd/...</Fit></UrlRest>
          <svg width="16" height="16" viewBox="0 0 16 16"><path d="M8 1.800l1.900 4.100 4.500.5-3.300 3 .9 4.400L8 11.600l-4 2.200.9-4.400-3.300-3 4.500-.5z" fill="none" stroke="#5d5d5d" strokeWidth="1.300" /></svg>
        </Omnibox>
        <svg width="155" height="22" viewBox="1211 60 155 22">
          <path d="M1214.500 66l3-2h2q4-1 6 2 1.500 5-.5 10-4 2-4.500-1l2-1v-2q-3 2-5-1h-3z" fill="#4a5157" /><circle cx="1223" cy="69.500" r="1" fill="#fff" /><circle cx="1217" cy="75" r="2.800" fill="#ee253a" />
          <circle cx="1252" cy="71" r="8" fill="#2fca75" /><path d="M1255.500 67.700A4.700 4.700 0 1 0 1256.500 72h-3.500M1256.500 72v3" fill="none" stroke="#fff" strokeWidth="1.400" />
          <path d="M1287 70q-8-2-9 2 0 6 5 6 5-1 3-4l-3-.5q5-1 4-3.500z" fill="#111" /><path d="M1278.500 68.500v-1M1280.700 67v-1.500M1283.500 66.500v-2" stroke="#111" strokeWidth="1.800" strokeLinecap="round" /><ellipse cx="1287.300" cy="66" rx="1.700" ry="2.700" fill="#111" transform="rotate(20 1287.300 66)" />
          <circle cx="1348.500" cy="66" r="1.700" fill="#5a5a5a" /><circle cx="1348.500" cy="71.500" r="1.700" fill="#5a5a5a" /><circle cx="1348.500" cy="77" r="1.700" fill="#5a5a5a" />
        </svg>
      </Toolbar>
      <BookmarkBar>
        <Bookmark $before={11} $gap={10}>
          <svg width="13" height="13" viewBox="0 0 13 13">
            {["#e8392b", "#e8392b", "#e8392b", "#28a257", "#3b7ded", "#f7b52b", "#28a257", "#f7b52b", "#f7b52b"].map((c, i) => <rect key={i} x={(i % 3) * 5} y={Math.floor(i / 3) * 5} width="3" height="3" fill={c} />)}
          </svg>
          <Fit w={35}>Apps</Fit>
        </Bookmark>
        <Bookmark $before={15} $gap={10}>
          <svg width="11" height="14" viewBox="0 0 11 14"><path d="M.7.7h6l3.600 3.600v9H.7zM6.500.7v4h4" fill="#fafafa" stroke="#5a5a5a" strokeWidth="1.300" /></svg>
          <Fit w={99}>localhost:8000</Fit>
        </Bookmark>
        <Bookmark $before={13} $gap={10}>
          <svg width="13" height="16" viewBox="0 0 13 16"><path d="M0 0h3v12l9 1.500V16H1z" fill="#45b618" /><path d="M1 14.500h11" stroke="#75de31" strokeWidth="1.500" /></svg>
          <Clip $w={112} $fade><Fit w={118}>Bengali Keyboard</Fit></Clip>
        </Bookmark>
        <Bookmark $before={14} $gap={8}>
          <svg width="16" height="16" viewBox="0 0 16 16"><rect width="16" height="16" fill="#fff" /><path d="M9 0q1 2-2 4t0 4M11 3q-3 1-2 3t-1 3" fill="none" stroke="#d85b42" strokeWidth="1.200" /><path d="M2 9.500h9q-1 3-4 3t-5-3zM11 9q4-1 3 1t-4 2M1 14q6 2 13 0" fill="none" stroke="#54779a" strokeWidth="1.300" /></svg>
          <Clip $w={112} $fade><Fit w={120}>Java Programmin</Fit></Clip>
        </Bookmark>
        <Bookmark $before={14} $gap={9}>
          <svg width="15" height="16" viewBox="0 0 15 16"><path d="M3 1h9v4h2v3q-1 5-6.500 8Q2 13 1 8V5h2z" fill="#242424" /><path d="M1 6l4 1 2.500-2L10 7l4-1-2 4-4.500-2L3 10z" fill="#e77d32" /><path d="M3.500 11l4-2 4 2-2 2-2-1.500L5.500 13z" fill="#e77d32" /><path d="M5 2h5v2.500H5z" fill="#ddd" /></svg>
          <Fit w={45}>Arrays</Fit>
        </Bookmark>
        <Bookmark $before={11} $gap={8}>
          <svg width="16" height="16" viewBox="0 0 16 16"><rect width="16" height="16" fill="#fa4726" /><rect x="2" y="4.500" width="12" height="7" rx="3.500" fill="none" stroke="#fff" strokeWidth="1.900" /></svg>
          <Clip $w={112} $fade><Fit w={114}>Arrays (The Java</Fit></Clip>
        </Bookmark>
        <Bookmark $before={15} $gap={8}><Folder /><Clip $w={113} $fade><Fit w={119}>Imported From IE</Fit></Clip></Bookmark>
        <Bookmark $before={13} $gap={8}>
          <svg width="16" height="16" viewBox="0 0 16 16"><rect width="16" height="16" rx="1" fill="#59453a" /><text x="8" y="11.500" textAnchor="middle" fill="#fff" fontFamily="Open Sans" fontWeight="700" fontSize="9.500">CC</text></svg>
          <Clip $w={112} $fade><Fit w={110}>Code, Compile &amp;</Fit></Clip>
        </Bookmark>
        <Bookmark $before={84} $gap={21}>
          <svg width="9" height="8" viewBox="0 0 9 8"><path d="M.8.8L4 4 .8 7.200M4.800.8L8 4 4.800 7.200" fill="none" stroke="#555" strokeWidth="1.400" /></svg>
          <Divider $l={-9} $r={-12} />
          <Folder />
        </Bookmark>
        <Bookmark $before={8} $gap={0}><Fit w={121}>Other bookmarks</Fit></Bookmark>
      </BookmarkBar>
    </>
  );
}

function Registration() {
  return (
    <Frame>
      <Doc>
        <DocHead>
          <DocTitle>Add or Drop Classes</DocTitle>
          <DocInfo>A20431923 Arko Chatterjee<br />Summer 2018<br />Apr 02, 2018 01:10 pm</DocInfo>
        </DocHead>
        <Note $after={13}>You cannot modify your class schedule this current term. To add a class, use the Course Search or enter the Course Reference Number (CRN) in the Add Classes section. To drop or withdraw from a class, use the Action pull-down list(s).</Note>
        <Note $bold $after={36}>Please note that you are NOT officially registered for a class if the status is Waitlisted.</Note>
        <ErrorNote>
          <svg width="13" height="13" viewBox="0 0 13 13"><circle cx="6.500" cy="6.500" r="6.500" fill="#f00808" /><path d="M5.200 2h2.600L7.300 7.500H5.700z" fill="#fff" /><circle cx="6.500" cy="9.600" r="1.200" fill="#fff" /></svg>
          Registration Add Errors
        </ErrorNote>
        <Errors>
          <thead><tr>{COLUMNS.map(([h, , w, term]) => <HeadCell key={h} $w={w}>{term ? <Term>{h}</Term> : h}</HeadCell>)}</tr></thead>
          <tbody><tr>{COLUMNS.map(([h, v]) => <td key={h}>{v}</td>)}</tr></tbody>
        </Errors>
        <SheetTitle>Add Classes Worksheet</SheetTitle>
        <CrnHead><Term>CRNs</Term></CrnHead>
        <CrnRow>{Array.from({ length: 10 }, (_, i) => <CrnInput key={i} type="text" />)}</CrnRow>
        <Actions>
          <ActionButton $w={122}>Submit Changes</ActionButton>
          <ActionButton $w={101}>Class Search</ActionButton>
          <ActionButton $w={53}>Reset</ActionButton>
        </Actions>
        <Links>
          {"[ "}
          {LINKS.map(([label, visited], i) => (
            <React.Fragment key={label}>{i > 0 && " | "}<Anchor $visited={visited}>{label}</Anchor></React.Fragment>
          ))}
          {" ]"}
        </Links>
        <Release>RELEASE: 8.7.1.1</Release>
      </Doc>
      <Scrollbar><ScrollArrow $up /><ScrollThumb /><ScrollArrow /></Scrollbar>
    </Frame>
  );
}

export default function App() {
  return (
    <Screen>
      <Global />
      <SystemPanel />
      <Body>
        <Launcher>
          {TILES.map((t, i) => (
            <Tile key={i} $bg={t.bg}>{t.icon}{t.running && <><RunMark /><RunMark $right /></>}</Tile>
          ))}
          <AmazonTile><Amazon /></AmazonTile>
          <Stack><FoldedStack /></Stack>
        </Launcher>
        <Browser>
          <BrowserChrome />
          <Page>
            <Banner><BannerName><Fit w={248} flat>ILLINOIS INSTITUTE OF TECHNOLOGY</Fit></BannerName></Banner>
            <PortalHead>
              <BackLink>
                <BackIcon width="14" height="9" viewBox="0 0 14 9"><rect x=".5" y=".5" width="13" height="8" fill="#ffffce" stroke="#999" /><path d="M6.300 2v5L3 4.500zM10.300 2v5L7 4.500z" fill="#000" /></BackIcon>
                <span>Back to<b>Academics Tab</b></span>
              </BackLink>
              {PORTAL.map(([label, icon]) => <PortalLink key={label}>{icon}{label}</PortalLink>)}
              <PortalRule />
              {SESSION.map(([label, icon]) => <PortalLink key={label}>{icon}{label}</PortalLink>)}
            </PortalHead>
            <Registration />
          </Page>
        </Browser>
      </Body>
    </Screen>
  );
}
